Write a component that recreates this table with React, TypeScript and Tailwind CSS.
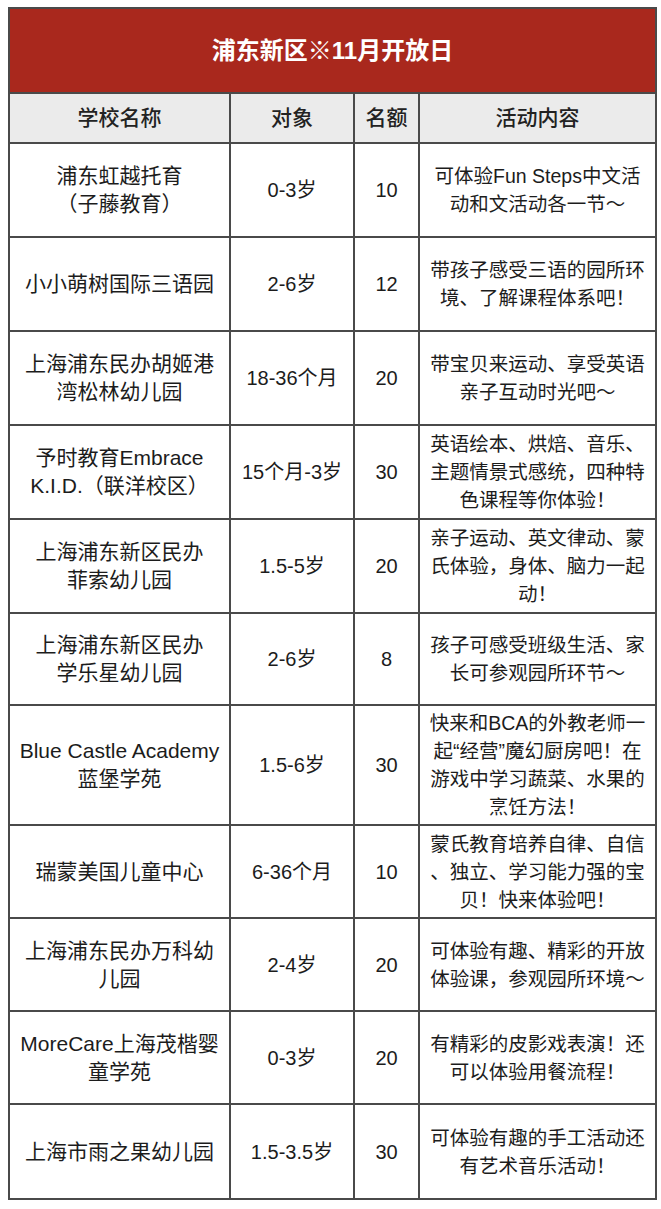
type Row = {
  name: string[];
  age: string;
  count: string;
  activity: string[];
  h: string;
};

const rows: Row[] = [
  { name: ['浦东虹越托育', '（子藤教育）'], age: '0-3岁', count: '10', activity: ['可体验Fun Steps中文活', '动和文活动各一节～'], h: 'h-[94px]' },
  { name: ['小小萌树国际三语园'], age: '2-6岁', count: '12', activity: ['带孩子感受三语的园所环', '境、了解课程体系吧！'], h: 'h-[94px]' },
  { name: ['上海浦东民办胡姬港', '湾松林幼儿园'], age: '18-36个月', count: '20', activity: ['带宝贝来运动、享受英语', '亲子互动时光吧～'], h: 'h-[94px]' },
  { name: ['予时教育Embrace', 'K.I.D.（联洋校区）'], age: '15个月-3岁', count: '30', activity: ['英语绘本、烘焙、音乐、', '主题情景式感统，四种特', '色课程等你体验！'], h: 'h-[94px]' },
  { name: ['上海浦东新区民办', '菲索幼儿园'], age: '1.5-5岁', count: '20', activity: ['亲子运动、英文律动、蒙', '氏体验，身体、脑力一起', '动！'], h: 'h-[94px]' },
  { name: ['上海浦东新区民办', '学乐星幼儿园'], age: '2-6岁', count: '8', activity: ['孩子可感受班级生活、家', '长可参观园所环节～'], h: 'h-[92px]' },
  { name: ['Blue Castle Academy', '蓝堡学苑'], age: '1.5-6岁', count: '30', activity: ['快来和BCA的外教老师一', '起“经营”魔幻厨房吧！在', '游戏中学习蔬菜、水果的', '烹饪方法！'], h: 'h-[120px]' },
  { name: ['瑞蒙美国儿童中心'], age: '6-36个月', count: '10', activity: ['蒙氏教育培养自律、自信', '、独立、学习能力强的宝', '贝！快来体验吧！'], h: 'h-[93px]' },
  { name: ['上海浦东民办万科幼', '儿园'], age: '2-4岁', count: '20', activity: ['可体验有趣、精彩的开放', '体验课，参观园所环境～'], h: 'h-[93px]' },
  { name: ['MoreCare上海茂楷婴', '童学苑'], age: '0-3岁', count: '20', activity: ['有精彩的皮影戏表演！还', '可以体验用餐流程！'], h: 'h-[93px]' },
  { name: ['上海市雨之果幼儿园'], age: '1.5-3.5岁', count: '30', activity: ['可体验有趣的手工活动还', '有艺术音乐活动！'], h: 'h-[95px]' },
];

function Lines({ lines }: { lines: string[] }) {
  return (
    <>
      {lines.map((l, i) => (
        <div key={i} className="whitespace-nowrap">
          {l}
        </div>
      ))}
    </>
  );
}

export default function App() {
  return (
    <div className="min-h-screen bg-white pt-[7px] pl-[8px] font-['Liberation_Sans','Noto_Sans_CJK_SC',sans-serif] text-[#1c1c1c]">
      <table className="w-[647px] table-fixed border-collapse">
        <colgroup>
          <col className="w-[221px]" />
          <col className="w-[124px]" />
          <col className="w-[65px]" />
          <col className="w-[237px]" />
        </colgroup>
        <thead>
          {/* Title bar */}
          <tr className="h-[85px]">
            <th
              colSpan={4}
              className="border-2 border-[#4a4a4a] bg-[#a9281d] text-center text-[24px] font-bold text-white"
            >
              浦东新区※11月开放日
            </th>
          </tr>
          <tr className="h-[50px] bg-[#ebebeb] text-[21px] font-medium text-[#222]">
            <th className="border-2 border-[#4a4a4a] font-medium">学校名称</th>
            <th className="border-2 border-[#4a4a4a] font-medium">对象</th>
            <th className="border-2 border-[#4a4a4a] font-medium">名额</th>
            <th className="border-2 border-[#4a4a4a] font-medium">活动内容</th>
          </tr>
        </thead>
        <tbody>
          {rows.map((r, i) => (
            <tr key={i} className={r.h}>
              <td className="border-2 border-[#4a4a4a] text-center text-[21px] leading-[28px]">
                <Lines lines={r.name} />
              </td>
              <td className="border-2 border-[#4a4a4a] text-center text-[20px] leading-[28px]">{r.age}</td>
              <td className="border-2 border-[#4a4a4a] text-center text-[20px] leading-[28px]">{r.count}</td>
              <td className="border-2 border-[#4a4a4a] text-center text-[19.5px] leading-[28px]">
                <Lines lines={r.activity} />
              </td>
            </tr>
          ))}
        </tbody>
      </table>
    </div>
  );
}
